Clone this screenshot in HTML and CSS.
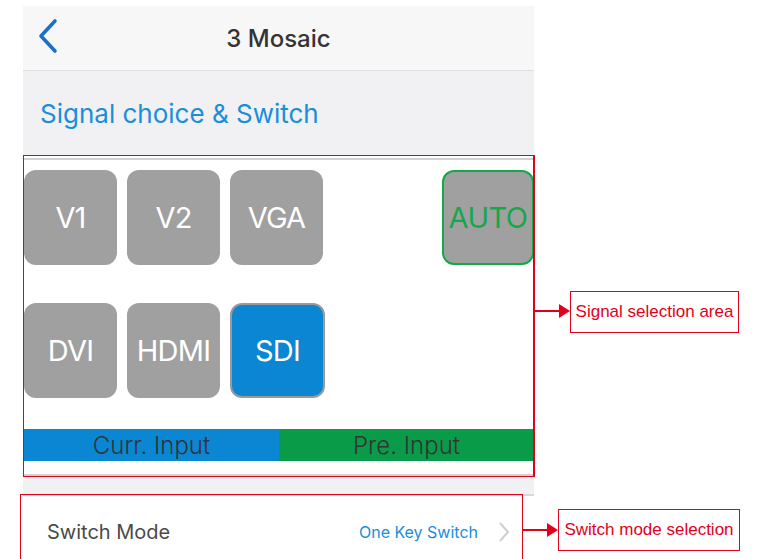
FILE: index.html
```html
<!DOCTYPE html>
<html lang="en">
<head>
    <meta charset="UTF-8"/>
    <meta name="viewport" content="width=device-width,initial-scale=1"/>
    <title>3 Mosaic - Signal choice</title>
    <link rel="stylesheet" href="styles.css">
</head>
<body>
<div class="screen">
    <div class="nav">
        <svg class="back" width="22" height="36" viewBox="0 0 22 36">
            <polyline points="18,3 4,18 18,33" fill="none" stroke="#1b6fc6" stroke-width="3.6" stroke-linecap="round" stroke-linejoin="round"/>
        </svg>
        <span class="title">3 Mosaic</span>
    </div>
    <div class="section-head">Signal choice &amp; Switch</div>

    <div class="signal">
        <div class="rule"></div>
        <div class="btn-row">
            <div class="sig">V1</div>
            <div class="sig">V2</div>
            <div class="sig">VGA</div>
            <div class="sig auto">AUTO</div>
        </div>
        <div class="btn-row second">
            <div class="sig">DVI</div>
            <div class="sig">HDMI</div>
            <div class="sig active">SDI</div>
        </div>
        <div class="legend">
            <div class="cur">Curr. Input</div>
            <div class="pre">Pre. Input</div>
        </div>
        <div class="rule bottom"></div>
    </div>

    <div class="gap"></div>

    <div class="row">
        <span class="row-label">Switch Mode</span>
        <span class="row-value">One Key Switch</span>
        <svg class="chev" width="12" height="22" viewBox="0 0 12 22">
            <polyline points="2,2 10,11 2,20" fill="none" stroke="#cfcfcf" stroke-width="2"/>
        </svg>
    </div>
</div>

<!-- annotations -->
<div class="mark mark-row"></div>
<div class="lead lead-signal"></div>
<div class="tip tip-signal"></div>
<div class="note note-signal">Signal selection area</div>
<div class="lead lead-row"></div>
<div class="tip tip-row"></div>
<div class="note note-row">Switch mode selection</div>
</body>
</html>
```

FILE: styles.css
```css
body { margin: 0; background: #fff; font-family: Inter, "Liberation Sans", sans-serif; overflow: hidden; }
.screen { width: 511px; margin-left: 23px; padding-top: 6px; }

.nav { position: relative; height: 64px; background: #f7f7f7; border-bottom: 1px solid #dedede; display: flex; align-items: center; justify-content: center; }
.back { position: absolute; left: 14px; top: 12px; }
.title { font-size: 24px; font-weight: 500; color: #333; }

.section-head { height: 84px; background: #f1f1f3; padding-left: 17px; display: flex; align-items: center; font-size: 26px; color: #1a8ed8; }

.signal { height: 322px; background: #fff; border: 1px solid #e3001b; border-right: 0; padding-top: 2px; box-sizing: border-box; display: flex; flex-direction: column; }
.rule { height: 2px; background: #d2d2d2; }
.rule.bottom { margin-top: auto; margin-bottom: 0; }
.btn-row { display: flex; gap: 10px; margin-top: 10px; }
.btn-row.second { margin-top: 38px; }
.sig { width: 93px; height: 95px; box-sizing: border-box; border-radius: 12px; background: #a0a0a0; color: #fff; font-size: 29px; letter-spacing: -0.8px; display: flex; align-items: center; justify-content: center; }
.sig.auto { margin-left: auto; width: 92px; border: 2px solid #14a84a; color: #14a84a; letter-spacing: -0.5px; }
.sig.active { background: #0a86d2; border: 2px solid #9a9a9a; width: 95px; }
.legend { display: flex; margin-top: 31px; height: 32px; }
.legend div { flex: 1; display: flex; align-items: center; justify-content: center; font-size: 24px; font-weight: 300; color: #333; }
.cur { background: #0a86d2; }
.pre { background: #0a9b48; }

.gap { height: 17px; background: #f1f1f3; }

.row { height: 72px; border-top: 2px solid #d8d8d8; display: flex; align-items: center; padding: 0 24px; }
.row-label { font-size: 20px; color: #4a4a4a; flex: 1; }
.row-value { font-size: 16px; color: #1a8ed8; margin-right: 20px; }

.mark, .lead, .tip, .note { position: absolute; }
.mark-signal { display: none; }
.mark-row { left: 20px; top: 494px; width: 501px; height: 80px; border: 1px solid #e3001b; }
.lead { height: 2px; background: #e3001b; }
.tip { width: 0; height: 0; border-top: 7px solid transparent; border-bottom: 7px solid transparent; border-left: 11px solid #e3001b; }
.lead-signal { left: 533px; top: 155px; width: 2px; height: 322px; }
.tip-signal { left: 559px; top: 304px; }
.lead-row { left: 522px; top: 529px; width: 26px; }
.tip-row { left: 547px; top: 523px; }
.note { border: 1px solid #e3001b; color: #e3001b; font-family: "Liberation Sans", Arial, sans-serif; font-size: 17px; display: flex; align-items: center; justify-content: center; box-sizing: border-box; }
.note-signal { left: 570px; top: 291px; width: 169px; height: 42px; }
.note-row { left: 558px; top: 509px; width: 182px; height: 42px; }
.note-signal::before { content: ""; position: absolute; left: -36px; top: 18px; width: 26px; height: 2px; background: #e3001b; }
```
